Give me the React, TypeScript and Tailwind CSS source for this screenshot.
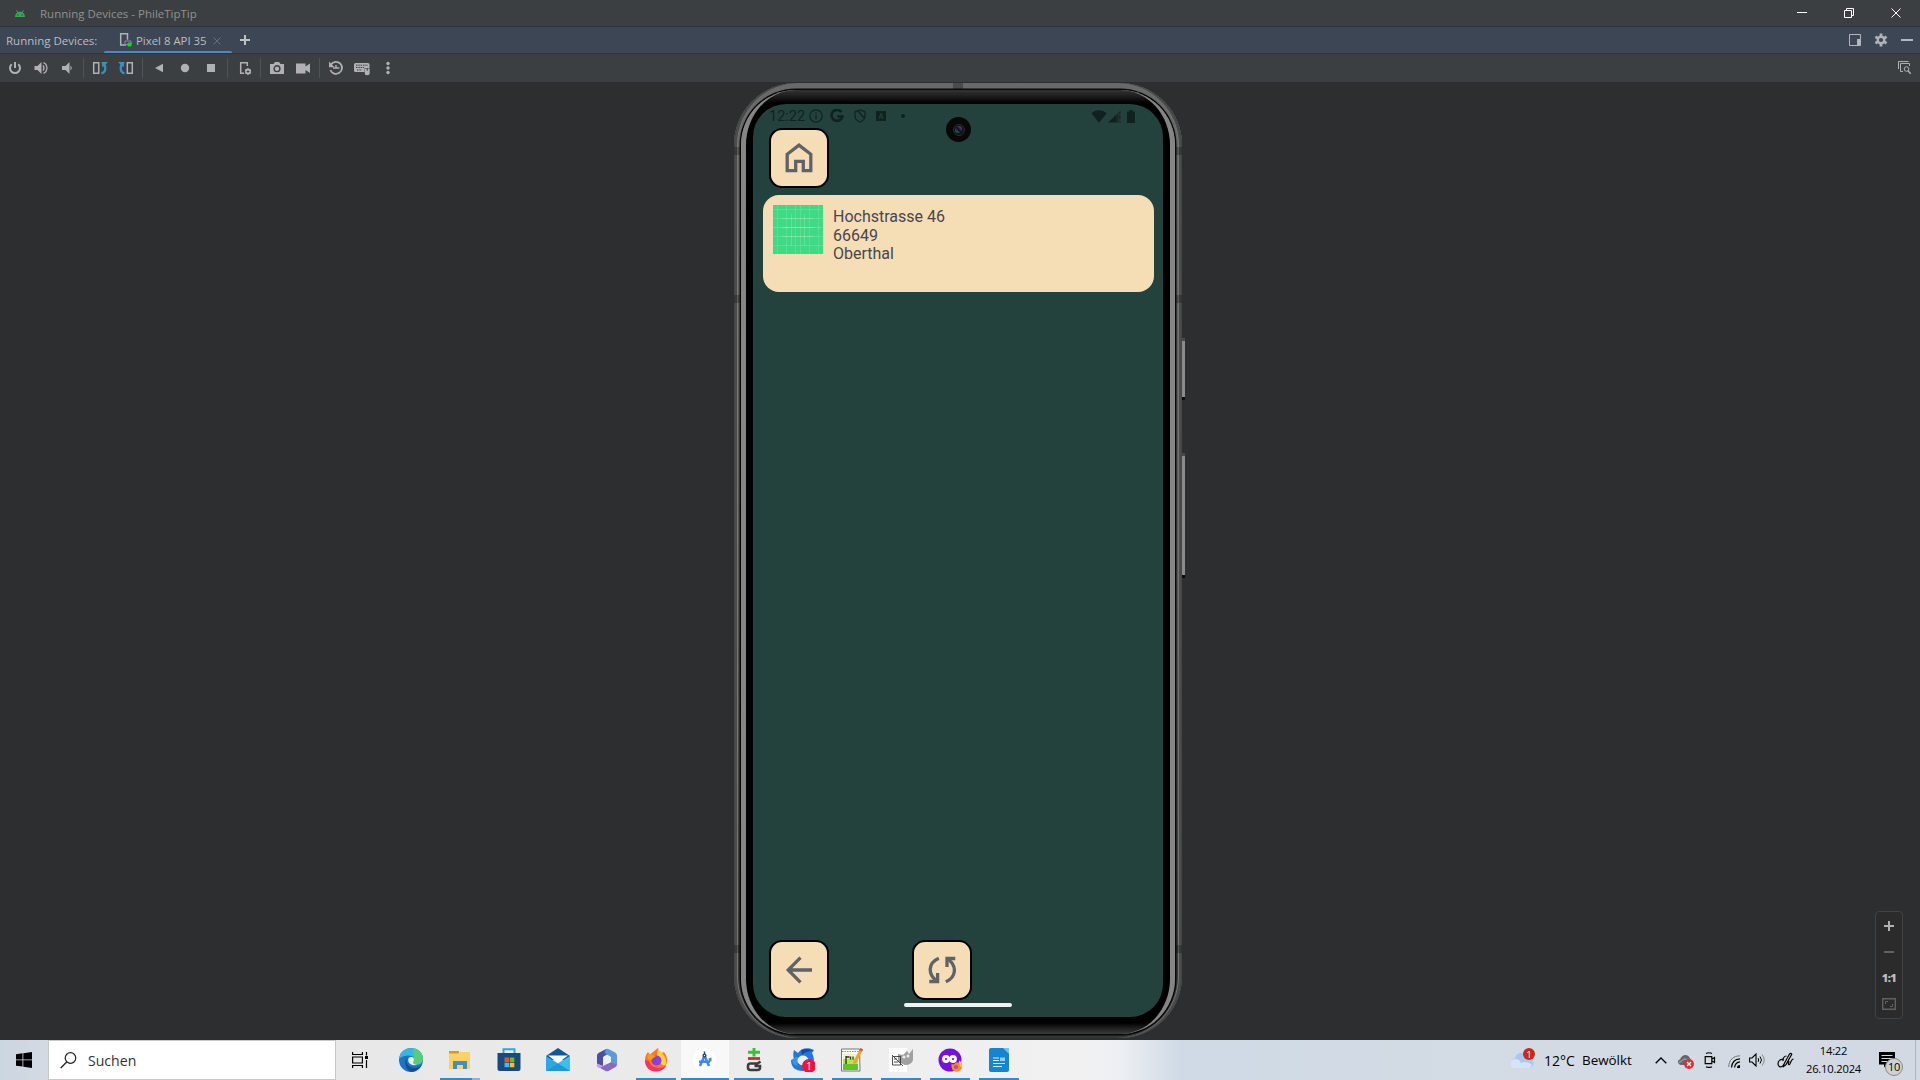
import React from "react";

type SvgProps = { w: number; h: number; children: React.ReactNode; className?: string };

function Svg({ w, h, children, className = "" }: SvgProps) {
  return (
    <svg width={w} height={h} viewBox={`0 0 ${w} ${h}`} fill="none" className={`block shrink-0 ${className}`}>
      {children}
    </svg>
  );
}

function TitleBar() {
  return (
    <div className="flex h-[26px] items-center bg-[#3c3f41] pl-[15px]">
      <Svg w={10} h={7}>
        <path d="M0 7C0 4.6 1 3.2 2.3 2.4L1.2 .4L1.8 0L3 2C4.2 1.5 5.8 1.5 7 2L8.2 0L8.8 .4L7.7 2.4C9 3.2 10 4.6 10 7Z" fill="#34a853" />
        <path d="M2.3 4.3h1.2v1.2h-1.2zM6.5 4.3h1.2v1.2h-1.2z" fill="#3c3f41" />
      </Svg>
      <span className="ml-[15px] mt-[2px] text-[11.5px] text-[#8f9192]">Running Devices - PhileTipTip</span>
      <div className="ml-auto flex items-center">
        <Svg w={48} h={26}><path d="M20 12.500h10" stroke="#fff" /></Svg>
        <Svg w={47} h={26}><path d="M19.500 10.500h7v7h-7zM21.500 10.500v-2h7v7h-2" stroke="#fff" /></Svg>
        <Svg w={48} h={26}><path d="M19.500 8.500l9 9M28.500 8.500l-9 9" stroke="#fff" /></Svg>
      </div>
    </div>
  );
}

function TabStrip() {
  return (
    <div className="flex h-[26px] bg-[#3c4655] text-[#bbbdbf]">
      <span className="w-[104px] whitespace-nowrap pl-[6px] pt-[5px] text-[11.5px] leading-[18px]">Running Devices:</span>
      <div className="flex h-[27px] w-[128px] flex-col">
        <div className="flex h-[24px] pl-[15px] pt-[5px]">
          <Svg w={14} h={16}>
            <path d="M7 13H1.700V1.700h6.800v6" stroke="#a9b4c0" strokeWidth="1.500" />
            <path d="M6 9h6v3.500H6z" stroke="#9c7bb8" />
            <rect x="8.500" y="10.500" width="4" height="4" rx="1" fill="#00e600" />
          </Svg>
          <span className="ml-[3px] w-[71px] whitespace-nowrap text-[11.400px] leading-[18px]">Pixel 8 API 35</span>
          <Svg w={8} h={8} className="ml-[6px] mt-[5px]"><path d="M.5.5l7 7M7.500.5l-7 7" stroke="#66707b" /></Svg>
        </div>
        <div className="h-[3px] rounded-full bg-[#4a88c7]" />
      </div>
      <Svg w={26} h={26}><path d="M8 13h10M13 8v10" stroke="#bdc1c5" strokeWidth="2" /></Svg>
      <div className="ml-auto flex items-center pr-[7px]">
        <Svg w={12} h={12}><path d="M.5.5h11v11H.5z" stroke="#b4b8bc" /><path d="M8 5h3v6H8z" fill="#b4b8bc" /></Svg>
        <Svg w={14} h={14} className="ml-[13px]">
          <circle cx="7" cy="7" r="3.300" stroke="#b0b3b6" strokeWidth="2.400" />
          <path d="M7 .6v2.600M7 10.800v2.600M1.400 3.800l2.300 1.300M10.300 8.900l2.300 1.300M1.400 10.200l2.300-1.300M10.300 5.100l2.300-1.300" stroke="#b0b3b6" strokeWidth="2.800" />
        </Svg>
        <Svg w={12} h={12} className="ml-[13px]"><path d="M0 6h12" stroke="#b4b8bc" strokeWidth="2" /></Svg>
      </div>
    </div>
  );
}

const G = "#afb1b3";

const toolGroups: React.ReactNode[][] = [
  [
    <><path d="M9.700 4.300a5 5 0 1 0 6.600 0" stroke={G} strokeWidth="2" /><path d="M13 2v6" stroke={G} strokeWidth="2" /></>,
    <><path d="M6.500 6h3l4-4v12l-4-4h-3z" fill={G} /><path d="M15 5.300q2 2.700 0 5.400" stroke={G} strokeWidth="1.300" /><path d="M15.500 2.600c4.500 2 4.500 8.800 0 10.800" stroke={G} strokeWidth="1.300" /></>,
    <><path d="M8 6h3.500l4-4v12l-4-4H8z" fill={G} /><path d="M16.500 5.500q2.500 2.500 0 5" fill={G} /></>,
  ],
  [
    <><path d="M6.700 2.700h5v10.600h-5z" stroke={G} strokeWidth="1.500" /><path d="M14.500 13.500c4.500-1.500 4.500-5.500 3-9" stroke="#3592c4" strokeWidth="2.200" /><path d="M14.500 2h6.500l-5.500 5.500z" fill="#3592c4" /></>,
    <><path d="M14.300 2.700h5v10.600h-5z" stroke={G} strokeWidth="1.500" /><path d="M11.500 13.500c-4.500-1.500-4.500-5.500-3-9" stroke="#3592c4" strokeWidth="2.200" /><path d="M11.500 2H5l5.500 5.500z" fill="#3592c4" /></>,
  ],
  [
    <path d="M9 8l8-4.200v8.400z" fill={G} />,
    <circle cx="13" cy="8" r="4.200" fill={G} />,
    <path d="M9 4h8v8H9z" fill={G} />,
  ],
  [
    <><path d="M13 13.300H9.700V2.700h6.600V6" stroke={G} strokeWidth="1.500" /><circle cx="17" cy="11.500" r="2.200" stroke={G} strokeWidth="1.500" /><path d="M17 8v7M14 9.700l6 3.500M14 13.200l6-3.500" stroke={G} strokeWidth="1.100" /><circle cx="17" cy="11.500" r="1.100" fill="#3c3f41" /></>,
  ],
  [
    <><path d="M6 4h3.500l1.500-2h4l1.500 2H20v10H6z" fill={G} /><circle cx="13" cy="8.700" r="2.900" stroke="#3c3f41" strokeWidth="1.400" /></>,
    <path d="M6 3.500h9.500v3L20 3.500v9.500l-4.500-3v3.500H6z" fill={G} />,
  ],
  [
    <><path d="M8 4.500A6 6 0 1 1 7.400 10" stroke={G} strokeWidth="1.800" /><path d="M6 1.500v5.700h5.500z" fill={G} /><path d="M10 8h3v-3M13 8h3.500" stroke={G} strokeWidth="1.500" /></>,
    <><path d="M6.500 3h12.500a1.500 1.500 0 0 1 1.500 1.500V8h-5v4h-9a1.500 1.500 0 0 1-1.500-1.500v-6A1.500 1.500 0 0 1 6.500 3z" fill={G} /><path d="M7 5.200h12M7 7.500h8M8 10h5" stroke="#3c3f41" strokeDasharray="1.500 .8" /><path d="M15.700 8.500h2v2.300h1V8.500h2v4.200a2.500 2.500 0 0 1-5 0z" fill={G} /></>,
    <><circle cx="13" cy="3.500" r="1.700" fill={G} /><circle cx="13" cy="8" r="1.700" fill={G} /><circle cx="13" cy="12.500" r="1.700" fill={G} /></>,
  ],
];

function Toolbar() {
  return (
    <div className="flex h-[28px] items-center bg-[#3c3f41] pl-[2px]">
      {toolGroups.map((group, gi) => (
        <div key={gi} className="flex items-center">
          {gi > 0 && <div className="mx-[3px] h-[20px] w-px bg-[#515355]" />}
          {group.map((icon, i) => (
            <Svg key={i} w={26} h={16}>{icon}</Svg>
          ))}
        </div>
      ))}
      <Svg w={14} h={14} className="-mt-[1px] ml-auto mr-[8px]">
        <path d="M.5 8V.5h10M5 10.500H2.500v-8h9V5" stroke={G} />
        <circle cx="8.500" cy="8" r="2.300" stroke={G} /><path d="M10 9.800l2.700 3" stroke={G} strokeWidth="1.500" />
      </Svg>
    </div>
  );
}

const S = "#11211e";

function StatusBar() {
  return (
    <div className="flex h-[24px] items-center pl-[16px] pr-[28px]">
      <span className="w-[40px] pt-px font-['Roboto'] text-[14.5px] text-[#11211e]">12:22</span>
      <Svg w={14} h={14}><circle cx="7" cy="7" r="6.200" stroke={S} strokeWidth="1.200" /><path d="M7 6.200v4M7 3.600v1.400" stroke={S} strokeWidth="1.300" /></Svg>
      <Svg w={14} h={14} className="ml-[7px]"><path d="M11.400 3A5.500 5.500 0 1 0 12.400 7.500H7.200" stroke={S} strokeWidth="2.600" /></Svg>
      <Svg w={12} h={14} className="ml-[10px]"><path d="M1 2.700L6 1l5 1.700V7c0 2.800-2 4.800-5 6-3-1.200-5-3.200-5-6z" stroke={S} strokeWidth="1.200" /><path d="M4 2l6 7" stroke={S} strokeWidth="1.300" /></Svg>
      <Svg w={10} h={10} className="ml-[10px]"><path d="M0 0h10v10H0z" fill={S} /><path d="M2.800 7.800L5 2.400l2.200 5.400M3.600 6.200h2.800" stroke="#24423d" /></Svg>
      <div className="ml-[15px] size-[4px] rounded-full bg-[#11211e]" />
      <Svg w={16} h={13} className="ml-auto"><path d="M.3 3.300C4.700-.7 11.300-.7 15.700 3.300L8 12.700z" fill={S} /></Svg>
      <Svg w={14} h={13} className="ml-[1px]"><path d="M0 12.500L8.500 4.500v8z" fill={S} /><path d="M8.500 4.500L12.500.5v3.500h-2.500v8.500H8.500zM10.500 5h2v4.500h-2zM10.500 10.700h2v1.800h-2z" fill={S} opacity=".75" /></Svg>
      <Svg w={8} h={13} className="ml-[5px]"><path d="M0 1.500h2.300V0h3.400v1.500H8V13H0z" fill={S} /></Svg>
    </div>
  );
}

function AppButton({ children }: { children: React.ReactNode }) {
  return (
    <div className="flex size-[60px] items-center justify-center rounded-[13px] border-2 border-black bg-[#f5deb6]">
      {children}
    </div>
  );
}

const I = "#5f6368";

function PhoneScreen() {
  return (
    <div className="relative flex h-[913px] w-[410px] flex-col overflow-hidden rounded-[33px] bg-[#24423d]">
      <StatusBar />
      <div className="absolute left-[193px] top-[13px] flex size-[25px] items-center justify-center rounded-full bg-[#080808]">
        <div className="flex size-[12px] items-center justify-center rounded-full border border-[#2c2c30] bg-[#101218]">
          <div className="size-[7px] rounded-full bg-linear-to-tr from-[#2f8aa0] via-[#11121d] to-[#8a55a0]" />
        </div>
      </div>
      <div className="pl-[16px]">
        <AppButton>
          <Svg w={28} h={30}>
            <path d="M2.200 11.200L14 2.200l11.800 9v16.500h-7.500v-9.400h-7.600v9.400H2.200z" stroke={I} strokeWidth="3.300" />
          </Svg>
        </AppButton>
      </div>
      <div className="ml-[10px] mt-[7px] flex h-[97px] w-[391px] rounded-[16px] bg-[#f5deb6] p-[10px]">
        <Svg w={50} h={49}>
          <path d="M0 0h50v49H0z" fill="#3ddc84" />
          <path d="M4.500 0v49M13.500 0v49M22.500 0v49M27.500 0v49M36.500 0v49M45.500 0v49M0 4.500h50M0 13.500h50M0 31.500h50M0 40.500h50" stroke="#fff" strokeWidth="1" opacity=".13" />
          <path d="M9 13.500h32M9 22.500h32M9 31.500h32M18.500 9v32M31.500 9v32M0 22.500h50" stroke="#fff" strokeWidth="1" opacity=".18" />
        </Svg>
        <div className="ml-[10px] mt-[3px] font-['Roboto'] text-[16px] leading-[18.7px] text-[#49454f]">
          <p>Hochstrasse 46</p>
          <p>66649</p>
          <p>Oberthal</p>
        </div>
      </div>
      <div className="mt-auto flex gap-[83px] pl-[16px]">
        <AppButton>
          <Svg w={28} h={28}><path d="M27 14H3.500M15.500 1.700L3.200 14l12.300 12.300" stroke={I} strokeWidth="3.300" /></Svg>
        </AppButton>
        <AppButton>
          <Svg w={28} h={28}>
            <path d="M10.800 2.300C.1 7-.4 18 8.300 24.500M17.800 25.700C28.500 21 29 10 20.300 3.500" stroke={I} strokeWidth="3.300" />
            <path d="M1.300 25.500h8.300V17M27.300 2.500H19V11" stroke={I} strokeWidth="3.300" />
          </Svg>
        </AppButton>
      </div>
      <div className="mb-[10px] ml-[151px] mt-[3px] h-[4px] w-[108px] rounded-full bg-[#f1f1f1]" />
    </div>
  );
}

function SideKey({ className }: { className: string }) {
  return <div className={`absolute right-[-3px] w-[3px] border-y-[3px] border-t-[#48494a] border-b-[#0c0c0c] bg-[#8b8b89] ${className}`} />;
}

function Phone() {
  return (
    <div className="relative h-[955px] w-[448px] rounded-[62px] bg-linear-to-b from-[#686a69] via-[#565656] to-[#333434] px-[7px] pb-[4px] pt-[7px] shadow-[inset_1px_0_0_#454545,inset_-1px_0_0_#454545,inset_3px_0_0_#4c4c4c,inset_-3px_0_0_#4c4c4c,inset_4px_0_0_#737373,inset_-4px_0_0_#737373]">
      <SideKey className="top-[255px] h-[62px]" />
      <SideKey className="top-[370px] h-[125px]" />
      {["top-[64px]", "top-[212px]", "top-[862px]"].map((pos) => (
        <div key={pos} className={`absolute inset-x-0 h-[8px] bg-black/25 ${pos}`} />
      ))}
      <div className="absolute left-[219px] top-0 h-[7px] w-[10px] bg-[#4b4b4b]" />
      <div className="relative h-[944px] rounded-[55px] border-x-[5px] border-[#858585] bg-[linear-gradient(to_bottom,#333_0px,#222_5px,#000_13px,#000_933px,#181818_937px,#3b3b3b_944px)] px-[7px] pt-[14px] shadow-[0_0_0_1.5px_#080808]">
        <PhoneScreen />
      </div>
    </div>
  );
}

function ZoomPanel() {
  return (
    <div className="absolute bottom-[21px] right-[17px] flex h-[108px] w-[28px] flex-col items-center rounded-[4px] border border-[#414243] bg-[#2b2b2b]">
      <Svg w={10} h={10} className="mt-[9px]"><path d="M0 5h10M5 0v10" stroke="#afb1b3" strokeWidth="2" /></Svg>
      <Svg w={10} h={2} className="mt-[20px]"><path d="M0 1h10" stroke="#606162" strokeWidth="2" /></Svg>
      <span className="mt-[15px] text-[11px] font-extrabold leading-[20px] tracking-[-0.5px] text-[#bcbdbf]">1:1</span>
      <Svg w={14} h={12} className="mt-[10px]"><path d="M.7.7h12.600v10.600H.7z" stroke="#606162" strokeWidth="1.400" /><path d="M3.500 6V3.500H6M10.500 6v2.500H8" stroke="#606162" /></Svg>
    </div>
  );
}

type App = { icon: React.ReactNode; running?: boolean; active?: boolean; stacked?: boolean };

const apps: App[] = [
  {
    icon: (
      <>
        <circle cx="12" cy="12" r="12" fill="#1b74c5" />
        <path d="M0 11C1 4 6 0 12 0c7 0 12 5 12 10.500 0 4-3 6-6 6-3.500 0-4.500-1.500-3.500-3 1.500-3-1-6-5-6C5 7.500 2 9 0 11z" fill="#35b8e0" />
        <path d="M14 .2C20 1 24 5.500 24 10.500c0 4-3 6-6 6-3.500 0-4.500-1.500-3.500-3C16 10 14 7 14 .2z" fill="#58cc78" />
        <path d="M8.500 9c-3 5 1 11 7 11 3 0 5-1 7-3-2 4-6 7-10.500 7C7 22 4 13 8.500 9z" fill="#12508f" />
        <path d="M14.500 13.500c1.500-3-.5-4.500-2.500-4.500-3.500 0-4 5 0 7.500 2 1 5 .8 6 0-3.500 0-4.500-1.500-3.500-3z" fill="#e8eef2" />
      </>
    ),
  },
  {
    running: true,
    stacked: true,
    icon: (
      <>
        <path d="M1 3h10v5H1z" fill="#d99a1b" /><path d="M1 5.500h9l2-1.500h10v17H1z" fill="#fbd264" />
        <path d="M5 21v-8h14v8h-4v-4H9v4z" fill="#3f8ed0" />
      </>
    ),
  },
  {
    icon: (
      <>
        <path d="M6.500 5V1.200h11V5" stroke="#29a9e8" strokeWidth="2" />
        <path d="M.5 5h23v16a2 2 0 0 1-2 2h-19a2 2 0 0 1-2-2z" fill="#174b80" />
        <path d="M7.500 9.500H12V14H7.500z" fill="#f25022" /><path d="M12.800 9.500h4.500V14h-4.500z" fill="#7fba00" />
        <path d="M7.500 14.700H12v4.500H7.500z" fill="#3ac0f2" /><path d="M12.800 14.700h4.500v4.500h-4.500z" fill="#ffc30f" />
      </>
    ),
  },
  {
    icon: (
      <>
        <path d="M0 8L12 0l12 8-4 4H4z" fill="#12579e" /><path d="M2 7.500h20L12 15z" fill="#fff" />
        <path d="M0 8l12 7.500L24 8v15H0z" fill="#2ba8e6" /><path d="M12 15.500L24 8v15z" fill="#38c0f0" /><path d="M0 23l12-7.500L24 23z" fill="#2196dc" />
      </>
    ),
  },
  {
    icon: (
      <>
        <path d="M11 1L3.500 5A3 3 0 0 0 2 7.500V16l6 2V9l8-5z" fill="#4d4fa5" />
        <path d="M11 1q1.500-.6 3 .2l6.500 3.600A3 3 0 0 1 22 7.500V17l-6-3V9L9.500 5z" fill="#5b9bdd" />
        <path d="M2 15.500l6 2.500 8-4 6 2.500a3 3 0 0 1-1.500 2.500L14 22.700a4 4 0 0 1-4 0L3.500 19A3 3 0 0 1 2 15.500z" fill="#8a68c4" />
        <path d="M2 15.500l6 2.500 2-1-5 3A3 3 0 0 1 2 16z" fill="#c3a0e6" />
        <circle cx="12" cy="11.500" r="4" fill="#edf0f4" />
      </>
    ),
  },
  {
    running: true,
    icon: (
      <>
        <path d="M12 1.500l2-1.500c.5 3 2 3 4 5l2-1c3 4 4 8 2.500 12C21 20.500 16.500 23.500 12 23.500 5.500 23.500.8 19 1 12c.2-3 1-6 3-8l2 2.500z" fill="#ff7a1f" />
        <path d="M14 0c.5 3 2 3 4 5 4 4 4.500 8 4 11-1 2-4 2-5-1l-4-8z" fill="#ffd23c" />
        <path d="M1 12c0 7 5 11.500 11 11.500 5 0 8.500-2.500 10.500-6C16 22 7 20 5 13z" fill="#f5326e" />
        <circle cx="12.500" cy="12.500" r="5" fill="#8a3fe0" /><path d="M4 6l5 1 3 2c-3 0-3 2-5 3-3 0-4-3-3-6z" fill="#ff9a1f" />
      </>
    ),
  },
  {
    running: true,
    active: true,
    icon: (
      <>
        <circle cx="11.500" cy="12" r="11.500" fill="#fff" />
        <path d="M11.500 7.500L7 18M11.500 7.500L16 18M6 13.800h11" stroke="#4285f4" strokeWidth="2.500" />
        <path d="M15.500 10.500l3-1v4H16z" fill="#2fa85a" /><circle cx="11.500" cy="7.500" r="2" fill="#26466b" /><path d="M11.500 3.500v3" stroke="#26466b" strokeWidth="1.500" /><circle cx="11.500" cy="7.500" r=".7" fill="#fff" />
      </>
    ),
  },
  {
    running: true,
    icon: (
      <>
        <path d="M12 0v8.500M6 4.300h12" stroke="#35c43a" strokeWidth="3" /><path d="M6 10.500h12" stroke="#d02c2c" strokeWidth="2.800" />
        <path d="M18.500 13.500l-3 2H8.500a2.500 2.500 0 0 0-2.500 2.500v1.500a2.500 2.500 0 0 0 2.500 2.500h7a2.500 2.500 0 0 0 2.500-2.500v-1.500h-5.500" stroke="#3d3d3d" strokeWidth="2.600" />
      </>
    ),
  },
  {
    running: true,
    icon: (
      <>
        <path d="M3 2l4 3c3-5 10-6 16-3l-2 3c4 7 2 18-9 18C4 23 0 19 0 12l3-1C2 8 2 5 3 2z" fill="#2278d8" />
        <path d="M1 12c2-3 5-4 7-2l-2 8c-3-1-5-3-5-6z" fill="#3f92e8" /><ellipse cx="12" cy="12.500" rx="5.500" ry="5" fill="#e7f1fa" />
        <path d="M10 2c5-2 9-1 12 1-5 0-8 1-11 4z" fill="#174b9f" /><circle cx="18" cy="18" r="7" fill="#f3123b" />
        <text x="18" y="22.200" textAnchor="middle" fontSize="11.500" fill="#fff" fontFamily="Open Sans, sans-serif">1</text>
      </>
    ),
  },
  {
    running: true,
    icon: (
      <>
        <path d="M1.500 1h18l.5 22H1.500z" fill="#fafafa" stroke="#777" /><path d="M3 6h15v5H3z" fill="#edf7c4" /><path d="M3 11h15v11H3z" fill="#b6e64a" /><path d="M3 16h15v6H3z" fill="#5fc42a" />
        <path d="M2 3.500h17" stroke="#888" strokeDasharray="1.500 1" /><path d="M6 8v8M6 9h3.500M10.500 8.500v3M13 8.500v3" stroke="#26301a" strokeWidth="1.300" />
        <path d="M20.500 0l2.500 1.500-6.500 13-3 2.500v-4z" fill="#eba52d" /><path d="M20.500 0l2.500 1.500-1 2-3-1.500z" fill="#cf5b52" />
      </>
    ),
  },
  {
    running: true,
    icon: (
      <>
        <path d="M0 0h18v24H0z" fill="#fff" /><path d="M9 6l5 1 4-4 2 3 4-5v10c0 4-4 6-8 6l-7-3z" fill="#a0a0a0" /><path d="M3.500 8.500h8v8.500h-8zM3 7l11 11M5 11h3M5 14h4" stroke="#3b3b3b" strokeWidth=".9" />
        <circle cx="15" cy="9" r="1.500" fill="#eee" /><circle cx="19" cy="8" r="1.500" fill="#eee" />
      </>
    ),
  },
  {
    running: true,
    icon: (
      <>
        <circle cx="12" cy="12" r="11.500" fill="#7610dc" /><circle cx="8" cy="11" r="2.500" stroke="#fff" strokeWidth="2.800" /><circle cx="15" cy="11" r="2.500" stroke="#fff" strokeWidth="2.800" />
        <path d="M13.500 16l2.500.5 2-2h3v-2c3 2 4 4.500 3 7.500-2 5-10 5-10.500-1z" fill="#ff8c1f" /><circle cx="18" cy="19" r="2" fill="#c441b8" /><path d="M21 12.500c3 2 4 4.500 3 7.500l-2-2z" fill="#ffc935" />
      </>
    ),
  },
  {
    running: true,
    icon: (
      <>
        <path d="M4 0h13l5 5v17a2 2 0 0 1-2 2H4a2 2 0 0 1-2-2V2a2 2 0 0 1 2-2z" fill="#1685d0" /><path d="M16 0h6v6z" fill="#73c4f5" />
        <path d="M6 10h6M6 12.500h6M6 15.500h12M6 18.500h9" stroke="#d5ecfb" /><path d="M13 9.500h5v3.500h-5z" fill="#8fd0fa" />
      </>
    ),
  },
];

function TaskbarApp({ app }: { app: App }) {
  return (
    <div className={`mr-px flex h-full w-[48px] flex-col items-center justify-end ${app.active ? "bg-[#f8f8f8]" : ""}`}>
      <Svg w={24} h={24} className="mb-[6px]">{app.icon}</Svg>
      <div className={`flex h-[2px] justify-end ${app.active ? "w-full" : "w-[40px]"} ${app.running ? "bg-[#2b8ec9]" : ""}`}>
        {app.stacked && <div className="w-[8px] bg-[#7fb9dd]" />}
      </div>
    </div>
  );
}

function Taskbar() {
  return (
    <div className="flex h-[40px] bg-[linear-gradient(to_right,#ccd6e1_0px,#d3dae2_48px,#e8e8e8_336px,#ebebeb_700px,#f1f1f1_1080px,#edf0f3_1120px,#cfdae6_1180px,#d3dbe4_1450px,#d2d9e2_1920px)] text-black">
      <div className="flex w-[48px] items-center justify-center">
        <Svg w={16} h={16}><path d="M0 2.300L6.500 1.300V7.500H0zM7.300 1.200L16 0v7.500H7.300zM0 8.300h6.500v6.300L0 13.700zM7.300 8.300H16V16l-8.700-1.200z" fill="#000" /></Svg>
      </div>
      <div className="flex w-[288px] items-center border border-[#c9c9c9] bg-white pl-[11px]">
        <Svg w={17} h={17}><circle cx="10.500" cy="6" r="5.300" stroke="#222" strokeWidth="1.200" /><path d="M6.700 10L.7 16" stroke="#222" strokeWidth="1.300" /></Svg>
        <span className="ml-[11px] mt-[1px] text-[14.100px] text-[#333]">Suchen</span>
      </div>
      <div className="flex w-[51px] items-center pl-[16px]">
        <Svg w={16} h={16}><path d="M.6 0v2.500h9.800V0M.6 16v-2.500h9.800V16M.6 5h9.800v6H.6zM14.500 0v3.500M14.500 8v8" stroke="#000" strokeWidth="1.200" /><path d="M13 4h3v3h-3z" fill="#000" /></Svg>
      </div>
      {apps.map((app, i) => <TaskbarApp key={i} app={app} />)}
      <div className="ml-auto flex">
        <div className="flex w-[132px] items-center">
          <Svg w={26} h={24} className="mt-[-4px]">
            <path d="M6 22a5 5 0 0 1-1-9.800A7.500 7.500 0 0 1 19 11a5.600 5.600 0 0 1 0 11z" fill="#a8c8f4" /><path d="M6 22a4.500 4.500 0 0 1-2-8.800q5-1 7 3.800 6-3 11 2a5 5 0 0 1-3 3z" fill="#d5e4fb" />
            <circle cx="19" cy="8" r="6" fill="#c42b1c" /><text x="19" y="11.500" fontSize="9" textAnchor="middle" fill="#fff" fontFamily="Open Sans, sans-serif">1</text>
          </Svg>
          <span className="ml-[8px] w-[38px] whitespace-nowrap text-[14px]">12°C</span>
          <span className="whitespace-nowrap text-[13.4px]">Bewölkt</span>
        </div>
        <div className="flex items-center pl-[13px]">
          <Svg w={12} h={7}><path d="M.7 6.300L6 1l5.300 5.300" stroke="#000" strokeWidth="1.300" /></Svg>
          <Svg w={17} h={15} className="ml-[10px] mt-[2px]"><path d="M4 11C0 10 0 6 3 5.500 5 0 11 0 12.500 3.500L14 6l-6 5z" fill="#666" /><path d="M1.500 9l6-4 6 1" stroke="#999" strokeWidth="1.500" /><circle cx="12" cy="10" r="5" fill="#dc3037" /><path d="M10 8l4 4M14 8l-4 4" stroke="#fff" strokeWidth="1.300" /></Svg>
          <Svg w={12} h={16} className="ml-[10px]"><path d="M1.200 4.600h6.600v7H1.200zM8 7l2.500-1.500v5L8 9M2 1.500q3-1.500 6 0M2 14.700q3 1.500 6 0" stroke="#000" strokeWidth="1.200" /></Svg>
          <Svg w={13} h={13} className="ml-[12px] mt-[2px]"><path d="M.7 12C1 5 5 1 12 .8" stroke="#777" /><path d="M3.500 12.500C4 7 7 4 12 3.800M6.500 12.500C7 9 9 7 12 6.800" stroke="#000" strokeWidth="1.200" /><path d="M9 13c0-2 1-3 3-3v3z" fill="#000" /></Svg>
          <Svg w={17} h={14} className="ml-[8px]"><path d="M.6 5H3l4-4v12L3 9H.6z" stroke="#000" strokeWidth="1.100" /><path d="M9 5q1.500 2 0 4M11 3.500q3 3.500 0 7" stroke="#000" /><path d="M13 1.500q4.500 5.500 0 11" stroke="#888" /></Svg>
          <Svg w={17} h={17} className="ml-[11px]"><path d="M6.500 13L12.500 2q1.500-1.500 2.300.3L9 12.500l-2.500 2zM7 8C4 6 .8 9 1 12s3.500 4 5 1.500M9.500 4C7 4 5.500 7 6 9M12 9c-1 3-.5 4 .5 3.500S14 7 16.500 7" stroke="#000" strokeWidth="1.200" /></Svg>
        </div>
        <div className="flex w-[81px] flex-col items-center pr-[2px] pt-[2px] text-[11.200px] leading-[18px] tracking-[-0.2px]">
          <span>14:22</span>
          <span>26.10.2024</span>
        </div>
        <div className="relative flex w-[40px] pl-[4px] pt-[12px]">
          <Svg w={16} h={16}><path d="M0 0h16v12.500H8L5 15.500v-3H0z" fill="#000" /><path d="M2.500 3.500h11M2.500 6.500h11M2.500 9.500h7" stroke="#d3dbe4" strokeWidth="1.200" /></Svg>
          <div className="absolute left-[10px] top-[18px] flex size-[18px] items-center justify-center rounded-full border border-[#888] bg-[#cfd1d4] text-[11px] tracking-[-0.3px]">10</div>
        </div>
        <div className="w-[5px] border-l border-[#aab2bc]" />
      </div>
    </div>
  );
}

export default function App() {
  return (
    <div className="flex h-[1080px] w-[1920px] flex-col overflow-hidden bg-[#323436] font-['Open_Sans',sans-serif]">
      <TitleBar />
      <div className="h-px shrink-0 bg-[#2f3133]" />
      <TabStrip />
      <div className="h-px shrink-0 bg-[#323436]" />
      <Toolbar />
      <div className="relative flex h-[958px] justify-center bg-[#2d2e30] pr-[4px] pt-[1px]">
        <Phone />
        <ZoomPanel />
      </div>
      <Taskbar />
    </div>
  );
}
